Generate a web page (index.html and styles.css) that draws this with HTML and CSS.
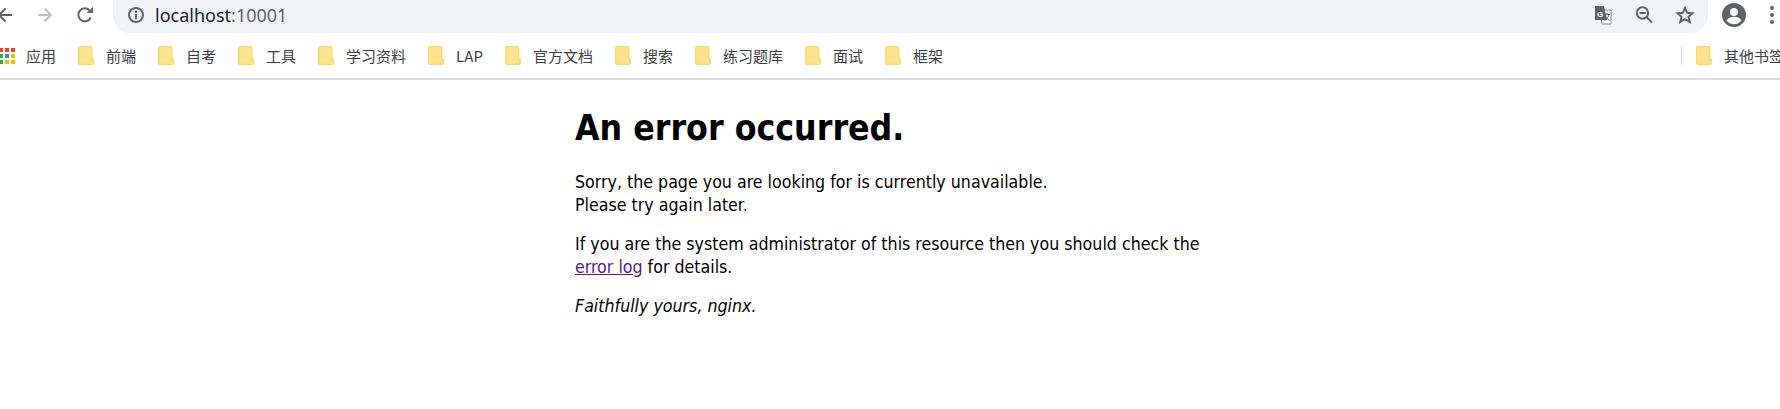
FILE: index.html
```html
<!DOCTYPE html>
<html lang="en">
<head>
<meta charset="utf-8">
<title>An error occurred</title>
<link rel="stylesheet" href="styles.css">
</head>
<body>
<svg class="defs" width="0" height="0" aria-hidden="true">
  <symbol id="folder" viewBox="0 0 16 19">
    <path d="M2 .7h10.500a1.300 1.300 0 0 1 1.300 1.300v11.500h1.500v3.500a1.300 1.300 0 0 1-1.300 1.300H2A1.300 1.300 0 0 1 .7 17V2A1.300 1.300 0 0 1 2 .7z" fill="#fee38f" stroke="#fbd768" stroke-width="1.300"/>
  </symbol>
</svg>
<header class="toolbar">
  <svg class="icon back" width="18" height="18" viewBox="0 0 18 18"><path d="M16 9H3M9.500 2.500 3 9l6.500 6.500" fill="none" stroke="#5f6368" stroke-width="2"/></svg>
  <svg class="icon forward" width="18" height="18" viewBox="0 0 18 18"><path d="M2 9h13M8.500 2.500 15 9l-6.500 6.500" fill="none" stroke="#bdc1c6" stroke-width="2"/></svg>
  <svg class="icon reload" width="18" height="18" viewBox="0 0 18 18"><path d="M14.800 11.500A6.500 6.500 0 1 1 13.600 4.400" fill="none" stroke="#5f6368" stroke-width="2"/><path d="M10.500 7H17V.8z" fill="#5f6368"/></svg>
  <div class="omnibox">
    <svg class="info" width="18" height="18" viewBox="0 0 18 18"><circle cx="9" cy="9" r="7" fill="none" stroke="#5f6368" stroke-width="2"/><path d="M8 8h2v5.200H8zM8 4.800h2v2H8z" fill="#5f6368"/></svg>
    <span class="url">localhost<span class="port">:10001</span></span>
    <span class="omni-actions">
      <svg width="20" height="20" viewBox="0 0 20 20"><path d="M7 5h11v14H9z" fill="#fff" stroke="#80868b" stroke-width="1"/><path d="M2 1h9l3 14H2z" fill="#5f6368"/><text class="g" x="4" y="12">G</text><path d="M11 9.500h6M14 8v1.500M16 9.500c-.6 3-2.500 5-4.500 6M12.500 11c.7 2 2.300 3.500 4 4.500" fill="none" stroke="#5f6368"/></svg>
      <svg width="20" height="20" viewBox="0 0 20 20"><circle cx="8.500" cy="8" r="5.700" fill="none" stroke="#5f6368" stroke-width="2"/><path d="M5.500 8h6M12.500 12l5.500 5.500" fill="none" stroke="#5f6368" stroke-width="2"/></svg>
      <svg width="20" height="20" viewBox="0 0 20 20"><path d="m10 2.800 2.200 5 5.400.5-4.100 3.500 1.300 5.300-4.800-2.900-4.700 2.900 1.200-5.300-4.100-3.500 5.400-.5z" fill="none" stroke="#5f6368" stroke-width="1.900"/></svg>
    </span>
  </div>
  <svg class="avatar" width="24" height="24" viewBox="0 0 24 24"><circle cx="12" cy="12" r="12" fill="#5f6368"/><circle cx="12" cy="9" r="4" fill="#fff"/><path d="M4.500 17.500c1.700-2.800 5-3.800 7.500-3.800s5.800 1 7.500 3.800a9.500 9.500 0 0 1-15 0z" fill="#fff"/></svg>
  <span class="dots"><i></i><i></i><i></i></span>
</header>
<nav class="bookmarks">
  <a class="mark apps"><span class="grid"><i class="r"></i><i class="r"></i><i class="r"></i><i class="g2"></i><i class="b"></i><i class="o"></i><i class="g2"></i><i class="o"></i><i class="o"></i></span>应用</a>
  <a class="mark"><svg class="folder"><use href="#folder"/></svg>前端</a>
  <a class="mark"><svg class="folder"><use href="#folder"/></svg>自考</a>
  <a class="mark"><svg class="folder"><use href="#folder"/></svg>工具</a>
  <a class="mark"><svg class="folder"><use href="#folder"/></svg>学习资料</a>
  <a class="mark"><svg class="folder"><use href="#folder"/></svg>LAP</a>
  <a class="mark"><svg class="folder"><use href="#folder"/></svg>官方文档</a>
  <a class="mark"><svg class="folder"><use href="#folder"/></svg>搜索</a>
  <a class="mark"><svg class="folder"><use href="#folder"/></svg>练习题库</a>
  <a class="mark"><svg class="folder"><use href="#folder"/></svg>面试</a>
  <a class="mark"><svg class="folder"><use href="#folder"/></svg>框架</a>
  <a class="mark other"><svg class="folder"><use href="#folder"/></svg>其他书签</a>
</nav>
<main class="page">
  <h1>An error occurred.</h1>
  <p>Sorry, the page you are looking for is currently unavailable.<br>Please try again later.</p>
  <p>If you are the system administrator of this resource then you should check the <a class="log" href="#">error log</a> for details.</p>
  <p><em>Faithfully yours, nginx.</em></p>
</main>
</body>
</html>
```

FILE: styles.css
```css
html, body {
  margin: 0;
  height: 100%;
  overflow: hidden;
  background: #fff;
}
.defs {
  display: block;
  height: 0;
}
.toolbar {
  display: flex;
  align-items: center;
  height: 33px;
  margin-left: -4px;
}
.toolbar > svg,
.dots {
  margin-bottom: 4px;
}
.icon {
  flex: none;
}
.forward {
  margin-left: 22px;
}
.reload {
  margin-left: 22px;
}
.omnibox {
  display: flex;
  align-items: center;
  flex: none;
  width: 1595px;
  height: 33px;
  margin-left: 19px;
  padding: 0 13px 4px 14px;
  box-sizing: border-box;
  background: #f1f3f4;
  border-radius: 17px;
  border-top-right-radius: 0;
  border-top-left-radius: 0;
}
.url {
  margin-left: 10px;
  font: 18px "Noto Sans", sans-serif;
  color: #202124;
}
.port {
  color: #5f6368;
}
.omni-actions {
  display: flex;
  gap: 21px;
  margin-left: auto;
}
.g {
  font: bold 8px "Liberation Sans", sans-serif;
  fill: #fff;
}
.avatar {
  flex: none;
  margin-left: 14px;
}
.dots {
  display: flex;
  flex-direction: column;
  gap: 3px;
  margin-left: 24px;
}
.dots i {
  width: 4px;
  height: 4px;
  border-radius: 50%;
  background: #5f6368;
}
.bookmarks {
  display: flex;
  align-items: center;
  height: 45px;
  border-bottom: 2px solid #dadce0;
  font: 15px "Noto Sans CJK SC", "Noto Sans", sans-serif;
  color: #3c4043;
  white-space: nowrap;
}
.mark {
  display: flex;
  align-items: center;
  flex: none;
  margin-right: 24px;
}
.grid {
  display: grid;
  grid-template-columns: repeat(3, 4px);
  gap: 2px;
  margin-right: 11px;
  margin-left: -1px;
}
.grid i {
  height: 4px;
}
.grid .r { background: #ea4335; }
.grid .g2 { background: #34a853; }
.grid .b { background: #4285f4; }
.grid .o { background: #fbbc04; }
.folder {
  width: 16px;
  height: 19px;
  margin-right: 12px;
  margin-left: -2px;
}
.other {
  margin-left: auto;
  margin-right: -4px;
  padding-left: 17px;
  position: relative;
}
.other::before {
  content: "";
  position: absolute;
  left: 0;
  top: 1px;
  bottom: 1px;
  width: 1px;
  background: #dadce0;
}
.page {
  width: 630px;
  margin: 0 auto;
  font: 17.65px/22.5px "DejaVu Sans Condensed", "DejaVu Sans", sans-serif;
  color: #000;
}
h1 {
  margin: 0;
  padding-top: 26px;
  font-size: 35.3px;
  line-height: 44px;
  font-weight: bold;
}
p {
  margin: 17px 0;
}
h1 + p {
  margin-top: 21px;
}
.log {
  color: #551a8b;
}
```
